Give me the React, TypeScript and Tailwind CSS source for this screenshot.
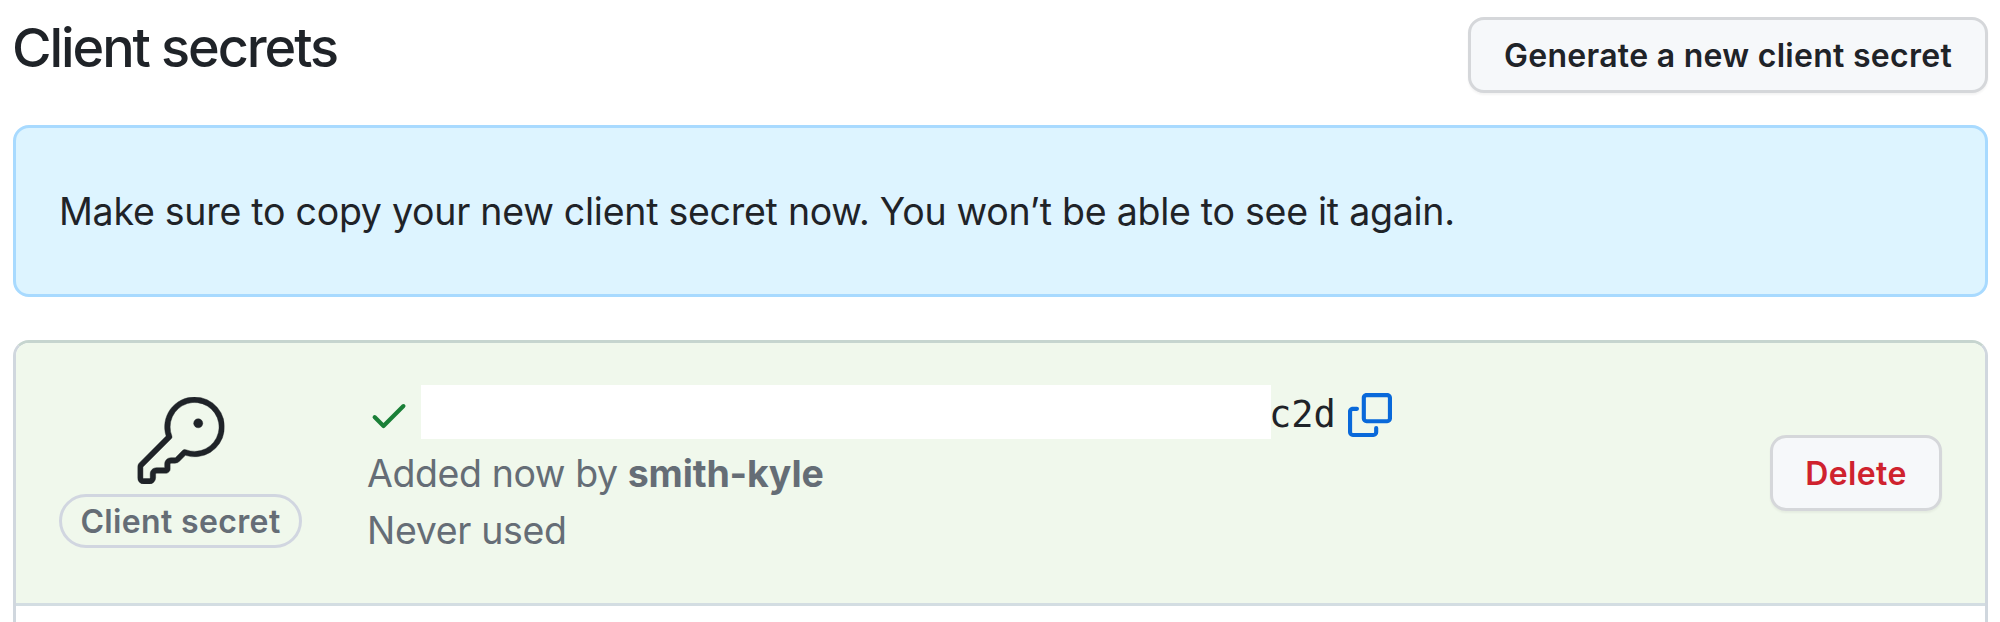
import React from "react";

function KeyIcon() {
  return (
    <svg viewBox="0 0 24 24" className="h-[87px] w-[87px] translate-x-[0.5px] fill-[#1f2328] stroke-[#1f2328] stroke-[0.12]" aria-hidden="true">
      <path d="M16.75 8.5a1.25 1.25 0 1 0 0-2.5 1.25 1.25 0 0 0 0 2.5Z" />
      <path d="M15.75 0a8.25 8.25 0 1 1-2.541 16.101l-1.636 1.636a1.744 1.744 0 0 1-1.237.513H9.25a.25.25 0 0 0-.25.25v1.448a.876.876 0 0 1-.256.619l-.214.213a.75.75 0 0 1-.545.22H5.25a.25.25 0 0 0-.25.25v1A1.75 1.75 0 0 1 3.25 24h-1.5A1.75 1.75 0 0 1 0 22.25v-2.836c0-.464.185-.908.513-1.236l7.386-7.388A8.249 8.249 0 0 1 15.75 0ZM9 8.25a6.733 6.733 0 0 0 .463 2.462.75.75 0 0 1-.168.804l-7.722 7.721a.25.25 0 0 0-.073.177v2.836c0 .138.112.25.25.25h1.5a.25.25 0 0 0 .25-.25v-1c0-.966.784-1.75 1.75-1.75H7.5v-1c0-.966.784-1.75 1.75-1.75h1.086a.25.25 0 0 0 .177-.073l1.971-1.972a.75.75 0 0 1 .804-.168A6.75 6.75 0 1 0 9 8.25Z" />
    </svg>
  );
}

function CheckIcon() {
  return (
    <svg viewBox="0 0 16 16" className="h-11 w-11 shrink-0 fill-[#1a7f37]" aria-hidden="true">
      <path d="M13.78 4.22a.75.75 0 0 1 0 1.06l-7.25 7.25a.75.75 0 0 1-1.06 0L2.22 9.28a.751.751 0 0 1 .018-1.042.751.751 0 0 1 1.042-.018L6 10.94l6.72-6.72a.75.75 0 0 1 1.06 0Z" />
    </svg>
  );
}

function CopyIcon() {
  return (
    <svg viewBox="0 0 16 16" className="h-11 w-11 fill-[#0969da]" aria-hidden="true">
      <path d="M0 6.75C0 5.784.784 5 1.75 5h1.5a.75.75 0 0 1 0 1.5h-1.5a.25.25 0 0 0-.25.25v7.5c0 .138.112.25.25.25h7.5a.25.25 0 0 0 .25-.25v-1.5a.75.75 0 0 1 1.5 0v1.5A1.75 1.75 0 0 1 9.25 16h-7.5A1.75 1.75 0 0 1 0 14.25Z" />
      <path d="M5 1.75C5 .784 5.784 0 6.75 0h7.5C15.216 0 16 .784 16 1.75v7.5A1.75 1.75 0 0 1 14.25 11h-7.5A1.75 1.75 0 0 1 5 9.25Zm1.75-.25a.25.25 0 0 0-.25.25v7.5c0 .138.112.25.25.25h7.5a.25.25 0 0 0 .25-.25v-7.5a.25.25 0 0 0-.25-.25Z" />
    </svg>
  );
}

export default function App() {
  return (
    <main className="h-[622px] overflow-hidden bg-white pt-[17px] pr-3 pl-[13px] font-['Inter',sans-serif] text-[#1f2328]">
      <header className="flex h-[108px] items-start justify-between">
        <h1 className="-ml-px text-[54px] leading-[61px] font-[450] tracking-[-2.1px]">Client secrets</h1>
        <button className="h-[76px] w-[520px] rounded-[16px] border-[3px] border-[#d5d7da] bg-[#f6f8fa] pt-0.5 text-[32px] font-[570] tracking-[0.28px] whitespace-nowrap shadow-[0_2px_2px_rgba(31,35,40,0.05)]">
          Generate a new client secret
        </button>
      </header>

      <div className="flex h-[172px] items-center rounded-[16px] border-[3px] border-[#a8daff] bg-[#ddf4ff] pl-[43px]">
        <p className="text-[37.5px] leading-[57px] tracking-[-0.26px] whitespace-nowrap">
          Make sure to copy your new client secret now. You won’t be able to see it again.
        </p>
      </div>

      <section className="mt-[43px] h-[400px] overflow-hidden rounded-t-[16px] border-[3px] border-[#d0d7de] border-t-[#c6d5cf]">
        <div className="flex h-[263px] items-center border-b-[3px] border-[#d3dde2] bg-[#f0f8ec] px-[43px] pb-0.5">
          <div className="flex w-[243px] shrink-0 flex-col items-center gap-[10px]">
            <KeyIcon />
            <span className="flex h-[54px] w-full items-center justify-center rounded-full border-[3px] border-[#d1d6e0] pt-0.5 text-[32px] font-[570] tracking-[0.35px] whitespace-nowrap text-[#656d76]">
              Client secret
            </span>
          </div>
          <div className="ml-[65px] flex-1 text-[37.5px] leading-[57px] text-[#656d76]">
            <div className="flex h-[57px] items-center pb-px">
              <CheckIcon />
              <span className="-mt-[6px] ml-[10px] h-[54px] w-[850px] bg-white" />
              <code className="-ml-0.5 font-['DejaVu_Sans_Mono',monospace] text-[37px] text-[#1f2328]">c2d</code>
              <button className="ml-[12px]" aria-label="Copy">
                <CopyIcon />
              </button>
            </div>
            <p className="relative top-px tracking-[-0.42px] whitespace-nowrap">
              Added now by <strong className="font-[650] tracking-[-0.15px]">smith-kyle</strong>
            </p>
            <p className="relative top-px tracking-[-0.35px]">Never used</p>
          </div>
          <button className="mt-0.5 h-[76px] w-[172px] rounded-[16px] border-[3px] border-[#d5d7da] bg-[#f6f8fa] pt-0.5 text-[32px] font-[570] tracking-[0.4px] text-[#cf222e] shadow-[0_2px_2px_rgba(31,35,40,0.05)]">
            Delete
          </button>
        </div>
      </section>
    </main>
  );
}
